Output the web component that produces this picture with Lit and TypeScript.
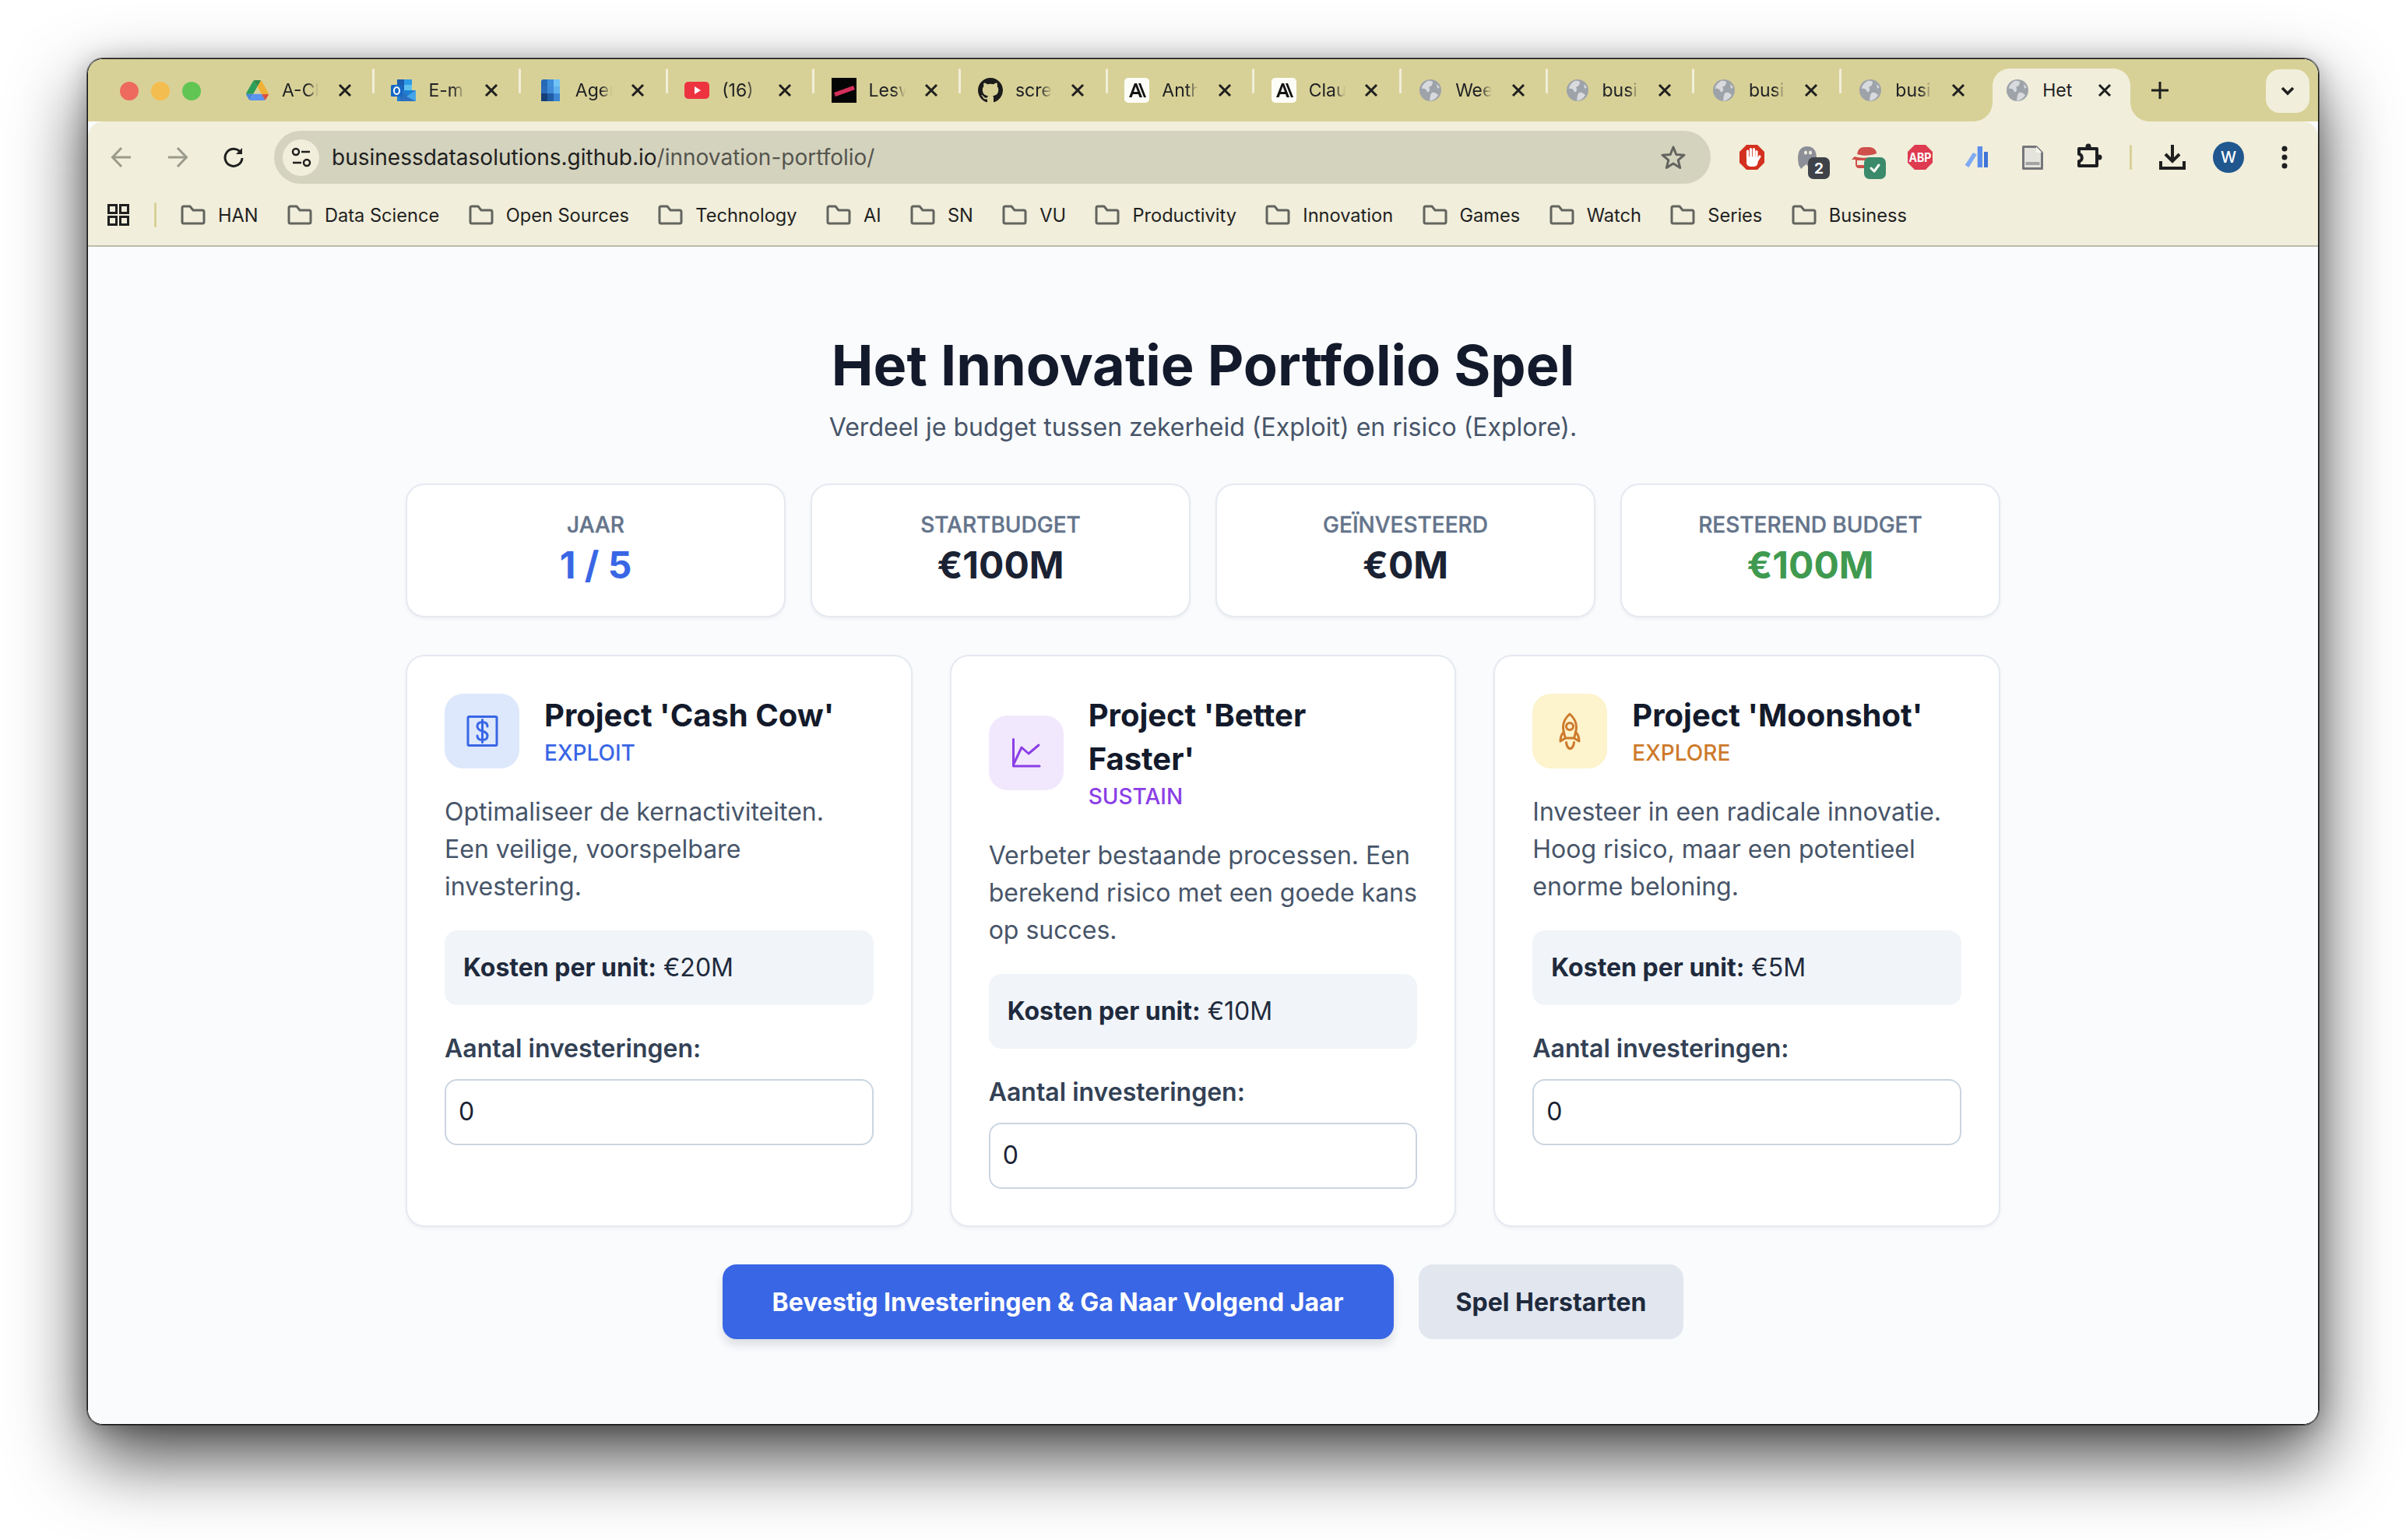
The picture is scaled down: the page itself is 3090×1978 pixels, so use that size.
import { LitElement, html, css, svg } from "lit";
import { customElement } from "lit/decorators.js";

const globe = svg`<circle cx="14" cy="14" r="14" fill="#9da3a8"/><path d="M10 2 C6 5 3 8 3 12 C7 11 9 13 10 16 C13 17 14 13 12 10 C15 9 17 7 17 3 C15 1.500 12 1.500 10 2Z M16 17 C13 20 14 24 13 27.500 C18 27 22 24 24 20 C21 17 19 16 16 17Z M22 6 L26 10 L23 12 Z" fill="#d8dade"/>`;

const favicons: Record<string, unknown> = {
  drive: svg`<svg class="fav" viewBox="0 0 87.3 78" width="29" height="26"><path d="m6.6 66.85 3.85 6.65c.8 1.4 1.95 2.5 3.3 3.3l13.75-23.8h-27.5c0 1.55.4 3.1 1.2 4.5z" fill="#4a86e0"/><path d="m43.65 25-13.75-23.8c-1.35.8-2.5 1.9-3.3 3.3l-25.4 44a9.06 9.06 0 0 0 -1.2 4.5h27.5z" fill="#2f9e58"/><path d="m73.55 76.8c1.35-.8 2.5-1.9 3.3-3.3l1.6-2.75 7.65-13.25c.8-1.4 1.2-2.95 1.2-4.5h-27.502l5.852 11.5z" fill="#d9503f"/><path d="m43.65 25 13.75-23.8c-1.35-.8-2.9-1.2-4.5-1.2h-18.5c-1.6 0-3.15.45-4.5 1.2z" fill="#2f8a4a"/><path d="m59.8 53h-32.3l-13.75 23.8c1.35.8 2.9 1.2 4.5 1.2h50.8c1.6 0 3.15-.45 4.5-1.2z" fill="#5b93f0"/><path d="m73.4 26.5-12.7-22c-.8-1.4-1.95-2.5-3.3-3.3l-13.75 23.8 16.15 28h27.45c0-1.55-.4-3.1-1.2-4.5z" fill="#eeb035"/></svg>`,
  outlook: svg`<svg class="fav" viewBox="0 0 32 28" width="32" height="28"><rect x="8" y="0" width="19" height="14" fill="#1b5fb0"/><rect x="17" y="0" width="10" height="7" fill="#2e9be6"/><rect x="17" y="7" width="10" height="7" fill="#5fc0f0"/><path d="M8 14 H32 V28 H8Z" fill="#1f7fd1"/><path d="M12 14 L32 28 H12Z" fill="#2a6fc0"/><path d="M32 14 L20 22 L32 28Z" fill="#45a4e8"/><rect x="0" y="7" width="15" height="15" rx="1.500" fill="#1768c4"/><ellipse cx="7.500" cy="14.500" rx="3.500" ry="4.500" fill="none" stroke="#fff" stroke-width="2"/></svg>`,
  agent: svg`<svg class="fav" viewBox="0 0 24 28" width="24" height="28"><rect width="24" height="28" rx="3" fill="#2668b5"/><rect x="8" y="0" width="8" height="9" fill="#3d8fdc"/><rect x="16" y="0" width="8" height="9" fill="#72c3f5" /><rect x="0" y="9" width="8" height="9" fill="#2a6cba"/><rect x="8" y="9" width="8" height="9" fill="#3e8ad8"/><rect x="16" y="9" width="8" height="9" fill="#5fb2ee"/><rect x="0" y="18" width="8" height="10" fill="#163f78"/><rect x="8" y="18" width="8" height="10" fill="#1f5ca6"/><rect x="16" y="18" width="8" height="10" fill="#3a86d4"/></svg>`,
  yt: svg`<svg class="fav" viewBox="0 0 32 24" width="32" height="24"><rect width="32" height="22" y="1" rx="5" fill="#ee3340"/><path d="M13 7 L21 12 L13 17Z" fill="#fff"/></svg>`,
  les: svg`<svg class="fav" viewBox="0 0 32 32" width="32" height="32"><rect width="32" height="32" fill="#050505"/><path d="M3 19 L28 10 L30 15 L5 24Z" fill="#d3305a"/></svg>`,
  gh: svg`<svg class="fav" viewBox="0 0 16 16" width="32" height="32"><path fill="#1b1b1b" d="M8 0C3.58 0 0 3.58 0 8c0 3.54 2.29 6.53 5.47 7.59.4.07.55-.17.55-.38 0-.19-.01-.82-.01-1.49-2.01.37-2.53-.49-2.69-.94-.09-.23-.48-.94-.82-1.13-.28-.15-.68-.52-.01-.53.63-.01 1.08.58 1.23.82.72 1.21 1.87.87 2.33.66.07-.52.28-.87.51-1.07-1.78-.2-3.64-.89-3.64-3.95 0-.87.31-1.59.82-2.15-.08-.2-.36-1.02.08-2.12 0 0 .67-.21 2.2.82.64-.18 1.32-.27 2-.27.68 0 1.36.09 2 .27 1.53-1.04 2.2-.82 2.2-.82.44 1.1.16 1.92.08 2.12.51.56.82 1.27.82 2.15 0 3.07-1.87 3.75-3.65 3.95.29.25.54.73.54 1.48 0 1.07-.01 1.93-.01 2.2 0 .21.15.46.55.38A8.013 8.013 0 0016 8c0-4.42-3.58-8-8-8z"/></svg>`,
  anth: svg`<svg class="fav" viewBox="0 0 32 32" width="32" height="32"><rect width="32" height="32" rx="5" fill="#fdfdf8"/><path d="M6 25 L13 7 H16 L23 25 H19.500 L18 21 H11 L9.500 25Z M12 18 H17 L14.500 11Z M18 7 H21 L28 25 H25Z" fill="#141413" fill-rule="evenodd"/></svg>`,
  globe: svg`<svg class="fav" viewBox="0 0 28 28" width="28" height="28">${globe}</svg>`,
};

const tabs = [
  ["drive", "A-Claude"], ["outlook", "E-mail"], ["agent", "Agenda"], ["yt", "(16)"], ["les", "Leswijzer"],
  ["gh", "screen"], ["anth", "Anthropic"], ["anth", "Claude"], ["globe", "Week"], ["globe", "business"],
  ["globe", "business"], ["globe", "business"], ["globe", "Het"],
];

const bookmarks = ["HAN", "Data Science", "Open Sources", "Technology", "AI", "SN", "VU", "Productivity", "Innovation", "Games", "Watch", "Series", "Business"];

const ext = [
  svg`<path d="M29 20 H43 L52 29 V43 L43 52 H29 L20 43 V29Z" fill="#d3301f"/><path d="M30.500 38 V28 M34.500 38 V25.500 M38.500 38 V25.500 M42 38 V28.500" stroke="#fff" stroke-width="3.200" stroke-linecap="round" fill="none"/><path d="M46 35 L41 43" stroke="#fff" stroke-width="3.200" stroke-linecap="round" fill="none"/><rect x="29" y="35" width="14.500" height="13" rx="5" fill="#fff"/>`,
  svg`<path d="M23 38 C23 27 27 22 35 22 C43 22 47 27 47 38 V44 L38 51 L34 45 L30 48 L27 51 L24 46Z" fill="#8d8f98"/><ellipse cx="33" cy="30" rx="2" ry="2.500" fill="#f1eedb"/><ellipse cx="39" cy="30" rx="2" ry="2.500" fill="#f1eedb"/><rect x="36" y="36" width="28" height="28" rx="7" fill="#3f4248"/><text x="50" y="57" class="badge">2</text>`,
  svg`<path d="M27 32 C28 26 31 23 36 23 H43 C48 23 52 27 52 31 C45 34 35 35 27 32Z" fill="#cf4f4a"/><path d="M20 39 L24 35 C30 37 36 37 44 36 V40 H27 V46 H40 V50 H30 C27 50 25 48 25 45 V39Z" fill="#cf4f4a"/><rect x="36" y="36" width="28" height="28" rx="7" fill="#3b8a6b"/><path d="M45 50 L49 54 L55 46" fill="none" stroke="#fff" stroke-width="3" stroke-linecap="round" stroke-linejoin="round"/>`,
  svg`<path d="M29 20 H43 L52 29 V43 L43 52 H29 L20 43 V29Z" fill="#de3a50"/><text x="36" y="42" class="abp" textLength="29" lengthAdjust="spacingAndGlyphs">ABP</text>`,
  svg`<path d="M21.700 46 L32 30 L36.700 32.500 L26.500 49Z" fill="#7fa9f4"/><rect x="37.700" y="22" width="6.300" height="27" fill="#5b8eec"/><rect x="46" y="29" width="5" height="20" fill="#3f73d8"/>`,
  svg`<path d="M24.500 22.500 H41 L48.500 30 V50.500 H24.500Z" fill="#e4e4dc" stroke="#74767a" stroke-width="3" stroke-linejoin="round"/><path d="M41 22.500 V30 H48.500Z" fill="#f8f8f2"/><rect x="27.500" y="42" width="18" height="4" fill="#a2a3a2"/>`,
  svg`<path d="M24 25 H47 V47 H24 V41 C29 41 29 32 24 32Z" fill="none" stroke="#1d1f22" stroke-width="4" stroke-linejoin="round"/><circle cx="36" cy="22" r="3.500" fill="#1d1f22"/><circle cx="50" cy="36" r="3.500" fill="#1d1f22"/>`,
];

@customElement("app-root")
export class AppRoot extends LitElement {
  static styles = css`
    :host { display: block; width: 3090px; height: 1978px; box-sizing: border-box; padding: 75px 112px 0; background: #fff; font-family: "Inter", "Noto Sans", sans-serif; overflow: hidden; }
    * { box-sizing: border-box; }
    .window { width: 2866px; height: 1755px; border-radius: 20px; border: 1px solid #161616; overflow: hidden; display: flex; flex-direction: column; background: #fafbfd; }
    .shadow { width: 2866px; height: 1755px; border-radius: 20px; box-shadow: 0 0 0 1px rgba(10,10,10,.55), 0 42px 95px rgba(0,0,0,.72), 0 4px 30px rgba(0,0,0,.25); }

    .strip { height: 80px; flex: none; background: #d8d197; display: flex; align-items: flex-start; padding-top: 12px; padding-left: 41px; position: relative; }
    .lights { display: flex; gap: 16px; margin-top: 17px; margin-right: 34.500px; }
    .light { width: 24px; height: 24px; border-radius: 50%; }
    .l-red { background: #ee6a5e; } .l-yellow { background: #f4bd4f; } .l-green { background: #61c554; }
    .tab { width: 188.400px; height: 56px; flex: none; display: flex; align-items: center; position: relative; padding-left: 21px; color: #202124; font-size: 23px; }
    .fav { flex: none; }
    .favbox { width: 33px; display: flex; justify-content: center; flex: none; }
    .tlabel { position: absolute; left: 69.500px; width: 47px; overflow: hidden; white-space: nowrap; -webkit-mask-image: linear-gradient(90deg, #000 68%, transparent 100%); mask-image: linear-gradient(90deg, #000 68%, transparent 100%); }
    .tclose { position: absolute; left: 141px; width: 18px; height: 18px; }
    .tab.sep::after { content: ""; position: absolute; right: 0; top: 0; width: 3px; height: 32px; border-radius: 2px; background: #f1eedb; }
    .tab.active { background: #f1eedb; margin-left: 6px; margin-right: 6px; width: 176.400px; height: 68px; border-radius: 22px 22px 0 0; padding-left: 15px; padding-bottom: 12px; }
    .tab.active .tlabel { left: 64px; top: 14px; -webkit-mask-image: none; mask-image: none; }
    .tab.active .tclose { left: 135px; top: 19px; }
    .tab.active::before, .tab.active::after { content: ""; position: absolute; bottom: 0; width: 24px; height: 24px; }
    .tab.active::before { left: -24px; background: radial-gradient(circle at 0 0, transparent 23.500px, #f1eedb 24px); }
    .tab.active::after { right: -24px; background: radial-gradient(circle at 100% 0, transparent 23.500px, #f1eedb 24px); }
    .plus { width: 24px; height: 24px; margin-left: 20px; margin-top: 16px; flex: none; }
    .more { position: absolute; right: 11px; top: 13px; width: 56px; height: 56px; border-radius: 18px; background: #f1eedb; display: flex; align-items: center; justify-content: center; }

    .toolbar { height: 92px; flex: none; background: #f1eedb; border-radius: 20px 20px 0 0; display: flex; align-items: center; padding-left: 7px; }
    .navbtn { width: 72px; height: 68px; flex: none; display: flex; align-items: center; justify-content: center; }
    .url { width: 1845px; height: 68px; margin: 0 17px 0 16px; flex: none; border-radius: 34px; background: #d4d3be; display: flex; align-items: center; padding-left: 11px; padding-right: 32px; }
    .tune { width: 47px; height: 47px; border-radius: 50%; background: #f1eedb; flex: none; display: flex; align-items: center; justify-content: center; margin-right: 16px; }
    .addr { font-size: 28px; color: #1f1f1f; white-space: nowrap; }
    .addr span { color: #55554e; }
    .star { margin-left: auto; flex: none; }
    .extbtn { width: 72px; height: 72px; flex: none; }
    .badge { font: 700 19px "Inter", sans-serif; fill: #fff; text-anchor: middle; }
    .abp { font: 700 16px "Inter", sans-serif; fill: #fff; text-anchor: middle; }
    .vsep { width: 36px; flex: none; display: flex; justify-content: center; }
    .vsep i { display: block; width: 3px; height: 32px; border-radius: 2px; background: #d8d197; }
    .avatar { width: 40px; height: 40px; border-radius: 50%; background: #20578f; color: #fff; font-size: 20px; font-weight: 500; display: flex; align-items: center; justify-content: center; }

    .bm { height: 69px; flex: none; background: #f1eedb; border-bottom: 2px solid #bcbcab; display: flex; align-items: flex-start; padding: 14px 0 0 25px; font-size: 23.600px; color: #1f1f1f; }
    .apps { width: 28px; height: 28px; flex: none; }
    .bmsep { width: 3px; height: 32px; margin: -2px 31px 0 32px; background: #d8d197; border-radius: 2px; flex: none; }
    .bmitem { display: flex; align-items: center; gap: 16px; height: 28px; margin-right: 37.400px; white-space: nowrap; flex: none; }

    .content { flex: 1; min-height: 0; display: flex; flex-direction: column; align-items: center; padding-top: 112px; background: #fafbfd; }
    h1 { margin: 0; font-size: 72px; line-height: 80px; font-weight: 700; color: #131a2b; }
    .sub { margin: 12px 0 0; font-size: 32px; line-height: 56px; color: #475569; }
    .stats { width: 2048px; display: grid; grid-template-columns: repeat(4, 1fr); gap: 32px; margin-top: 44px; }
    .stat { height: 172px; background: #fff; border: 2px solid #e5e9f0; border-radius: 24px; box-shadow: 0 2px 4px rgba(15,23,42,.05); padding: 31px 30px; text-align: center; }
    .stat .lbl { font-size: 28px; line-height: 40px; font-weight: 500; color: #64748b; -webkit-text-stroke: 0.4px #64748b; }
    .stat .val { font-size: 48px; line-height: 64px; font-weight: 700; color: #1a2233; }
    .stat .val.v-blue { color: #3966e5; } .stat .val.v-green { color: #3f9a50; }
    .cards { width: 2048px; display: grid; grid-template-columns: repeat(3, 1fr); gap: 48px; margin-top: 48px; }
    .card { background: #fff; border: 2px solid #e5e9f0; border-radius: 24px; box-shadow: 0 2px 4px rgba(15,23,42,.05); padding: 48px; height: 735px; }
    .head { display: flex; align-items: center; gap: 32px; margin-bottom: 32px; }
    .tile { width: 96px; height: 96px; border-radius: 24px; flex: none; display: flex; align-items: center; justify-content: center; }
    .tile svg { fill: none; stroke-width: 3; stroke-linecap: round; stroke-linejoin: round; }
    .t-blue { background: #dde8fc; } .t-blue svg { stroke: #3966e5; }
    .t-purple { background: #f2e8fd; } .t-purple svg { stroke: #8b3fe6; }
    .t-orange { background: #fdf3cc; } .t-orange svg { stroke: #cd7a2b; }
    h2 { margin: 0; font-size: 40px; line-height: 56px; font-weight: 700; color: #131a2b; }
    .tag { font-size: 28px; line-height: 40px; font-weight: 500; }
    .c-blue { color: #3966e5; } .c-purple { color: #8b3fe6; } .c-orange { color: #cd7a2b; }
    .desc { margin: 0 0 32px; font-size: 32px; line-height: 48px; color: #475569; }
    .cost { background: #f1f5f9; border-radius: 16px; padding: 24px; font-size: 32px; line-height: 48px; color: #1f2a3d; margin-bottom: 32px; }
    .cost b { font-weight: 700; }
    .field { display: block; font-size: 32px; line-height: 48px; font-weight: 600; color: #334155; margin-bottom: 15px; }
    .input { width: 100%; height: 85px; background: #fff; border: 2px solid #cbd5e1; border-radius: 16px; padding: 0 16px 2px; font: 400 32px "Inter", sans-serif; color: #1a2233; display: block; }
    .actions { display: flex; gap: 32px; margin-top: 48px; }
    .btn { height: 96px; border: 0; border-radius: 18px; font: 700 32px "Inter", sans-serif; padding: 0 64px; }
    .primary { background: #3966e5; color: #fff; box-shadow: 0 8px 12px rgba(15,23,42,.12); }
    .secondary { background: #e2e7ef; color: #1f2a3d; padding: 0 48px; }
  `;

  private close() {
    return html`<svg class="tclose" viewBox="0 0 18 18"><path d="M2 2 L16 16 M16 2 L2 16" stroke="#1f1f1f" stroke-width="3" fill="none"/></svg>`;
  }

  private folder() {
    return html`<svg width="32" height="26" viewBox="0 0 32 26" fill="none"><path d="M2 4 a2 2 0 0 1 2 -2 H12 L16 7 H28 a2 2 0 0 1 2 2 V22 a2 2 0 0 1 -2 2 H4 a2 2 0 0 1 -2 -2Z" stroke="#63645f" stroke-width="3" stroke-linejoin="round"/></svg>`;
  }

  private project(tone: string, icon: unknown, title: string, tag: string, desc: string, cost: string) {
    return html`<div class="card">
      <div class="head">
        <div class="tile t-${tone}">${icon}</div>
        <div><h2>${title}</h2><div class="tag c-${tone}">${tag}</div></div>
      </div>
      <p class="desc">${desc}</p>
      <div class="cost"><b>Kosten per unit:</b> ${cost}</div>
      <label class="field">Aantal investeringen:</label>
      <input class="input" type="number" .value=${"0"} />
    </div>`;
  }

  render() {
    const dollar = html`<svg width="48" height="48" viewBox="0 0 48 48"><rect x="6" y="5.500" width="37" height="37" rx="1.500"/><path d="M31 18 C31 14.500 28.500 12.500 24.500 12.500 C20.500 12.500 18 14.500 18 18 C18 21.500 21 23 24.500 24 C28 25 31 26.500 31 30 C31 33.500 28.500 35.500 24.500 35.500 C20.500 35.500 18 33.500 18 30 M24.500 9.500 V38.500"/></svg>`;
    const chart = html`<svg width="48" height="48" viewBox="0 0 48 48"><path d="M7.500 6.500 V41 H41 M8 38 L18 17 L27 25 L40 14"/></svg>`;
    const rocket = html`<svg width="48" height="48" viewBox="0 0 48 48"><path d="M24 2 C18.500 7 15.500 13 15.500 19 C15.500 24 17 28 18.500 33 H29.500 C31 28 32.500 24 32.500 19 C32.500 13 29.500 7 24 2Z"/><circle cx="24" cy="18" r="4.500"/><path d="M16.500 25 C13.500 28 12 32 12 37 L18.500 33 M31.500 25 C34.500 28 36 32 36 37 L29.500 33 M19.500 38.500 C20 43 22 46 24.500 47 C27 46 29 43 29.500 38.500"/></svg>`;
    return html`
      <div class="shadow"><div class="window">
        <div class="strip">
          <div class="lights"><div class="light l-red"></div><div class="light l-yellow"></div><div class="light l-green"></div></div>
          ${tabs.map(([f, t], i) => {
            const active = i === 12;
            const cls = active ? "tab active" : i < 11 ? "tab sep" : "tab";
            return html`<div class=${cls}><div class="favbox">${favicons[f]}</div><div class="tlabel">${t}</div>${this.close()}</div>`;
          })}
          <svg class="plus" viewBox="0 0 24 24"><path d="M12 1 V23 M1 12 H23" stroke="#1f1f1f" stroke-width="3" fill="none"/></svg>
          <div class="more"><svg width="18" height="12" viewBox="0 0 18 12"><path d="M2 2 L9 9 L16 2" stroke="#1f1f1f" stroke-width="3.500" fill="none"/></svg></div>
        </div>
        <div class="toolbar">
          <div class="navbtn"><svg width="28" height="28" viewBox="0 0 28 28" fill="none"><path d="M26 14 H3 M14 2 L2.500 14 L14 26" stroke="#9b9b8d" stroke-width="3"/></svg></div>
          <div class="navbtn"><svg width="28" height="28" viewBox="0 0 28 28" fill="none"><path d="M2 14 H25 M14 2 L25.500 14 L14 26" stroke="#9b9b8d" stroke-width="3"/></svg></div>
          <div class="navbtn"><svg width="28" height="28" viewBox="0 0 28 28" fill="none"><path d="M23 8 A11 11 0 1 0 25 15" stroke="#1f1f1f" stroke-width="3"/><path d="M25 2 V10 H17Z" fill="#1f1f1f"/></svg></div>
          <div class="url">
            <div class="tune"><svg width="26" height="26" viewBox="0 0 26 26" fill="none" stroke="#1f1f1f" stroke-width="2.500"><circle cx="6" cy="6" r="4"/><path d="M13 6 H24 M2 20 H13"/><circle cx="20" cy="20" r="4"/></svg></div>
            <div class="addr">businessdatasolutions.github.io<span>/innovation-portfolio/</span></div>
            <svg class="star" width="32" height="32" viewBox="0 0 32 32" fill="none"><path d="M16 3 L19.800 12.500 L30 13.200 L22.200 19.700 L24.700 29.500 L16 24.100 L7.300 29.500 L9.800 19.700 L2 13.200 L12.200 12.500Z" stroke="#63645f" stroke-width="3" stroke-linejoin="round"/></svg>
          </div>
          ${ext.map((e) => html`<svg class="extbtn" viewBox="0 0 72 72">${e}</svg>`)}
          <div class="vsep"><i></i></div>
          <div class="navbtn"><svg width="34" height="32" viewBox="0 0 34 32" fill="none" stroke="#1f1f1f" stroke-width="4"><path d="M17 0 V20 M8 12 L17 21 L26 12"/><path d="M2 21 V30 H32 V21"/></svg></div>
          <div class="navbtn"><div class="avatar">W</div></div>
          <div class="navbtn"><svg width="8" height="30" viewBox="0 0 8 30" fill="#1f1f1f"><circle cx="4" cy="4" r="3.500"/><circle cx="4" cy="15" r="3.500"/><circle cx="4" cy="26" r="3.500"/></svg></div>
        </div>
        <div class="bm">
          <svg class="apps" viewBox="0 0 28 28" fill="none" stroke="#1f1f1f" stroke-width="3"><rect x="1.500" y="1.500" width="10" height="10"/><rect x="16.500" y="1.500" width="10" height="10"/><rect x="1.500" y="16.500" width="10" height="10"/><rect x="16.500" y="16.500" width="10" height="10"/></svg>
          <div class="bmsep"></div>
          ${bookmarks.map((b) => html`<div class="bmitem">${this.folder()}<span>${b}</span></div>`)}
        </div>
        <div class="content">
          <h1>Het Innovatie Portfolio Spel</h1>
          <p class="sub">Verdeel je budget tussen zekerheid (Exploit) en risico (Explore).</p>
          <div class="stats">
            <div class="stat"><div class="lbl">JAAR</div><div class="val v-blue">1 / 5</div></div>
            <div class="stat"><div class="lbl">STARTBUDGET</div><div class="val">€100M</div></div>
            <div class="stat"><div class="lbl">GEÏNVESTEERD</div><div class="val">€0M</div></div>
            <div class="stat"><div class="lbl">RESTEREND BUDGET</div><div class="val v-green">€100M</div></div>
          </div>
          <div class="cards">
            ${this.project("blue", dollar, "Project 'Cash Cow'", "EXPLOIT", "Optimaliseer de kernactiviteiten. Een veilige, voorspelbare investering.", "€20M")}
            ${this.project("purple", chart, "Project 'Better Faster'", "SUSTAIN", "Verbeter bestaande processen. Een berekend risico met een goede kans op succes.", "€10M")}
            ${this.project("orange", rocket, "Project 'Moonshot'", "EXPLORE", "Investeer in een radicale innovatie. Hoog risico, maar een potentieel enorme beloning.", "€5M")}
          </div>
          <div class="actions">
            <button class="btn primary">Bevestig Investeringen &amp; Ga Naar Volgend Jaar</button>
            <button class="btn secondary">Spel Herstarten</button>
          </div>
        </div>
      </div></div>
    `;
  }
}
